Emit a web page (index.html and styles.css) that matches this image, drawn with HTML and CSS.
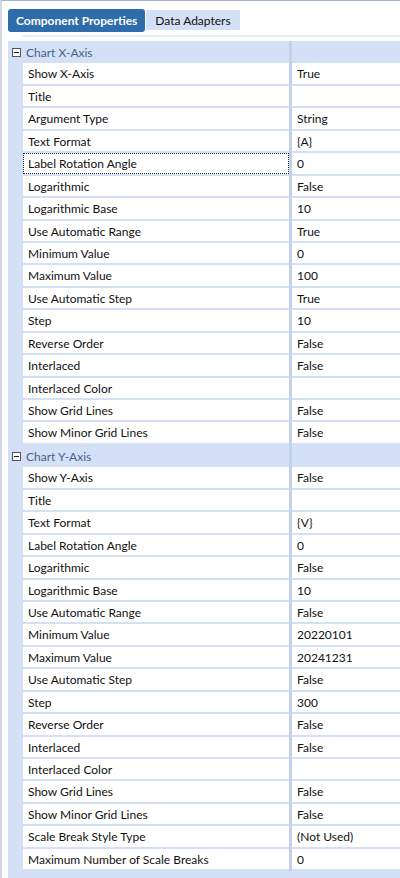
FILE: index.html
```html
<!DOCTYPE html>
<html>
<head>
<meta charset="utf-8">
<link rel="stylesheet" href="styles.css">
</head>
<body>
<div class="frame">
  <div class="tabs">
    <div class="tab active">Component Properties</div>
    <div class="tab">Data Adapters</div>
  </div>
  <div class="strip"></div>
  <div class="grid">
    <div class="group"><span class="toggle"><svg width="9" height="9" viewBox="0 0 9 9"><rect x="0.5" y="0.5" width="8" height="8" fill="#fff" stroke="#555"/><rect x="2" y="4" width="5" height="1" fill="#222"/></svg></span><span class="gname">Chart X-Axis</span><span class="gsplit"></span></div>
    <div class="row"><div class="name">Show X-Axis</div><div class="split"></div><div class="val">True</div></div>
    <div class="row"><div class="name">Title</div><div class="split"></div><div class="val"></div></div>
    <div class="row"><div class="name">Argument Type</div><div class="split"></div><div class="val">String</div></div>
    <div class="row"><div class="name">Text Format</div><div class="split"></div><div class="val">{A}</div></div>
    <div class="row"><div class="name focus">Label Rotation Angle</div><div class="split"></div><div class="val">0</div></div>
    <div class="row"><div class="name">Logarithmic</div><div class="split"></div><div class="val">False</div></div>
    <div class="row"><div class="name">Logarithmic Base</div><div class="split"></div><div class="val">10</div></div>
    <div class="row"><div class="name">Use Automatic Range</div><div class="split"></div><div class="val">True</div></div>
    <div class="row"><div class="name">Minimum Value</div><div class="split"></div><div class="val">0</div></div>
    <div class="row"><div class="name">Maximum Value</div><div class="split"></div><div class="val">100</div></div>
    <div class="row"><div class="name">Use Automatic Step</div><div class="split"></div><div class="val">True</div></div>
    <div class="row"><div class="name">Step</div><div class="split"></div><div class="val">10</div></div>
    <div class="row"><div class="name">Reverse Order</div><div class="split"></div><div class="val">False</div></div>
    <div class="row"><div class="name">Interlaced</div><div class="split"></div><div class="val">False</div></div>
    <div class="row"><div class="name">Interlaced Color</div><div class="split"></div><div class="val"></div></div>
    <div class="row"><div class="name">Show Grid Lines</div><div class="split"></div><div class="val">False</div></div>
    <div class="row"><div class="name">Show Minor Grid Lines</div><div class="split"></div><div class="val">False</div></div>
    <div class="group"><span class="toggle"><svg width="9" height="9" viewBox="0 0 9 9"><rect x="0.5" y="0.5" width="8" height="8" fill="#fff" stroke="#555"/><rect x="2" y="4" width="5" height="1" fill="#222"/></svg></span><span class="gname">Chart Y-Axis</span><span class="gsplit"></span></div>
    <div class="row"><div class="name">Show Y-Axis</div><div class="split"></div><div class="val">False</div></div>
    <div class="row"><div class="name">Title</div><div class="split"></div><div class="val"></div></div>
    <div class="row"><div class="name">Text Format</div><div class="split"></div><div class="val">{V}</div></div>
    <div class="row"><div class="name">Label Rotation Angle</div><div class="split"></div><div class="val">0</div></div>
    <div class="row"><div class="name">Logarithmic</div><div class="split"></div><div class="val">False</div></div>
    <div class="row"><div class="name">Logarithmic Base</div><div class="split"></div><div class="val">10</div></div>
    <div class="row"><div class="name">Use Automatic Range</div><div class="split"></div><div class="val">False</div></div>
    <div class="row"><div class="name">Minimum Value</div><div class="split"></div><div class="val">20220101</div></div>
    <div class="row"><div class="name">Maximum Value</div><div class="split"></div><div class="val">20241231</div></div>
    <div class="row"><div class="name">Use Automatic Step</div><div class="split"></div><div class="val">False</div></div>
    <div class="row"><div class="name">Step</div><div class="split"></div><div class="val">300</div></div>
    <div class="row"><div class="name">Reverse Order</div><div class="split"></div><div class="val">False</div></div>
    <div class="row"><div class="name">Interlaced</div><div class="split"></div><div class="val">False</div></div>
    <div class="row"><div class="name">Interlaced Color</div><div class="split"></div><div class="val"></div></div>
    <div class="row"><div class="name">Show Grid Lines</div><div class="split"></div><div class="val">False</div></div>
    <div class="row"><div class="name">Show Minor Grid Lines</div><div class="split"></div><div class="val">False</div></div>
    <div class="row"><div class="name">Scale Break Style Type</div><div class="split"></div><div class="val">(Not Used)</div></div>
    <div class="row"><div class="name">Maximum Number of Scale Breaks</div><div class="split"></div><div class="val">0</div></div>
  </div>
</div>
</body>
</html>
```

FILE: styles.css
```css
html, body {
  margin: 0;
  padding: 0;
  background: #ffffff;
}
body {
  font-family: "Lato", "Noto Sans", sans-serif;
  font-size: 12px;
  color: #111111;
}
.frame {
  width: 400px;
  height: 878px;
  box-sizing: border-box;
  border-top: 1px solid #a3b2d2;
  border-left: 2px solid #d3d9e3;
  overflow: hidden;
  background: #ffffff;
}
.tabs {
  display: flex;
  align-items: flex-start;
  padding: 8px 0 0 6px;
  height: 24px;
}
.tab {
  height: 20px;
  line-height: 21px;
  margin-top: 1px;
  padding: 0 9px 0 9px;
  background: #d4e0f5;
  color: #111;
  white-space: nowrap;
}
.tab.active {
  height: 23px;
  line-height: 23px;
  margin-top: 0;
  margin-right: 1px;
  padding: 0 8px 0 8px;
  background: #2e6cab;
  color: #ffffff;
  font-weight: 700;
  border-radius: 3px;
}
.strip {
  height: 2px;
  margin: 2px 0 4px 20px;
  background: #e8eef9;
}
.grid {
  margin-left: 6px;
  background: #d4e0f5;
  height: 850px;
}
.group {
  display: flex;
  align-items: center;
  height: 22.45px;
  background: #d4e0f5;
}
.toggle {
  width: 18px;
  padding-left: 4px;
  box-sizing: border-box;
  display: flex;
  align-items: center;
}
.toggle svg {
  display: block;
}
.gname {
  width: 263px;
  color: #4b5f8e;
  line-height: 23px;
}
.gsplit {
  width: 3px;
  align-self: stretch;
  background: #c3d2ea;
}
.row {
  display: flex;
  height: 22.45px;
  margin-left: 15px;
  box-sizing: border-box;
  border-bottom: 2px solid #d4e0f5;
  background: #ffffff;
}
.name {
  width: 266px;
  box-sizing: border-box;
  padding-left: 5px;
  line-height: 22px;
  white-space: nowrap;
  overflow: hidden;
}
.name.focus {
  outline: 1px dotted #333;
  outline-offset: -1px;
}
.split {
  width: 3px;
  background: #c3d2ea;
  margin-bottom: -2px;
}
.val {
  flex: 1;
  padding-left: 5px;
  line-height: 22px;
  white-space: nowrap;
}
```
